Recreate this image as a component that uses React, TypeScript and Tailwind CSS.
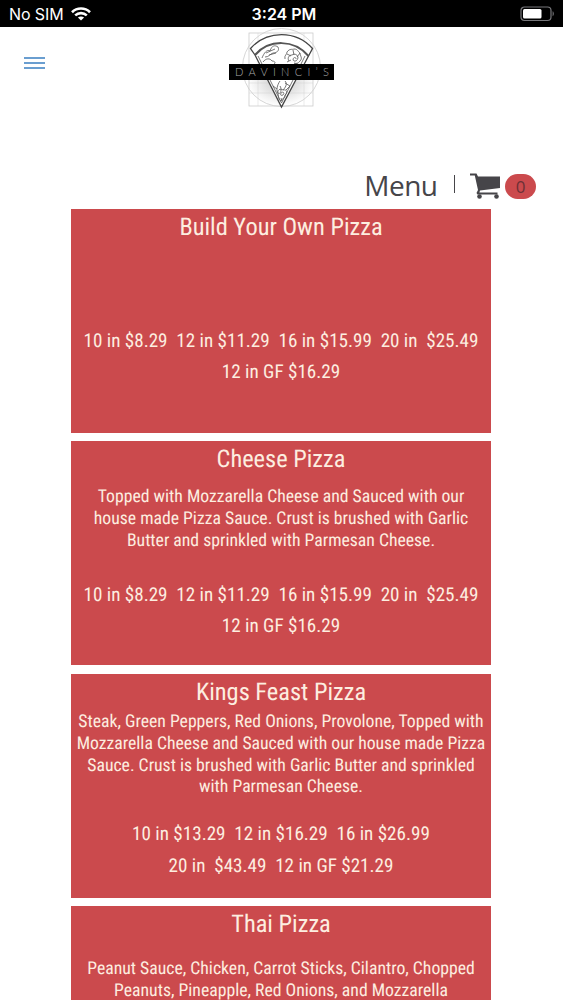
type Pizza = {
  name: string;
  description: string[];
  prices: string[];
  descriptionClass: string;
};

const pizzas: Pizza[] = [
  {
    name: "Build Your Own Pizza",
    description: [],
    prices: [
      "10 in $8.29  12 in $11.29  16 in $15.99  20 in  $25.49",
      "12 in GF $16.29",
    ],
    descriptionClass: "h-[80.6px]",
  },
  {
    name: "Cheese Pizza",
    description: [
      "Topped with Mozzarella Cheese and Sauced with our",
      "house made Pizza Sauce. Crust is brushed with Garlic",
      "Butter and sprinkled with Parmesan Cheese.",
    ],
    prices: [
      "10 in $8.29  12 in $11.29  16 in $15.99  20 in  $25.49",
      "12 in GF $16.29",
    ],
    descriptionClass: "h-[102.5px] pt-[11px]",
  },
  {
    name: "Kings Feast Pizza",
    description: [
      "Steak, Green Peppers, Red Onions, Provolone, Topped with",
      "Mozzarella Cheese and Sauced with our house made Pizza",
      "Sauce. Crust is brushed with Garlic Butter and sprinkled",
      "with Parmesan Cheese.",
    ],
    prices: [
      "10 in $13.29  12 in $16.29  16 in $26.99",
      "20 in  $43.49  12 in GF $21.29",
    ],
    descriptionClass: "h-[109.5px] pt-[3.5px]",
  },
  {
    name: "Thai Pizza",
    description: [
      "Peanut Sauce, Chicken, Carrot Sticks, Cilantro, Chopped",
      "Peanuts, Pineapple, Red Onions, and Mozzarella",
    ],
    prices: [],
    descriptionClass: "h-[102px] pt-[18px]",
  },
];

function StatusBar() {
  return (
    <div className="grid h-[27px] grid-cols-3 items-center bg-black pt-0.5 pr-2 pl-[9px] font-['Inter',sans-serif] text-white">
      <div className="flex items-center gap-[7px]">
        <span className="-mt-px text-[16px] leading-none tracking-[-0.1px]">No SIM</span>
        <svg className="-mt-0.5" width="20" height="14" viewBox="0 0 20 14" fill="none" stroke="white" strokeWidth="2.6">
          <path d="M1 5.2C6 .3 14 .3 19 5.2" />
          <path d="M4.2 8.4c3.3-3.1 8.3-3.1 11.6 0" />
          <path d="M10 13.5 6.9 10.6c1.7-1.6 4.5-1.6 6.2 0Z" fill="white" stroke="none" />
        </svg>
      </div>
      <span className="-mt-px pl-1 text-center text-[16px] leading-none font-semibold">3:24 PM</span>
      <svg className="-mt-0.5 justify-self-end" width="35" height="16" viewBox="0 0 35 16" fill="none">
        <rect x="1" y="1" width="30" height="13.5" rx="3.5" stroke="#77777b" strokeWidth="1.2" />
        <rect x="3" y="3" width="18.5" height="9.5" rx="1.5" fill="white" />
        <path d="M32.6 5.3c1.6.6 1.6 4.3 0 4.9Z" fill="#77777b" />
      </svg>
    </div>
  );
}

function Logo() {
  return (
    <svg width="105" height="81" viewBox="0 0 105 81" fill="none">
      <defs>
        <radialGradient id="shade">
          <stop offset="0" stopColor="#888" stopOpacity=".5" />
          <stop offset="1" stopColor="#999" stopOpacity="0" />
        </radialGradient>
      </defs>
      <ellipse cx="52" cy="54" rx="34" ry="24" fill="url(#shade)" />
      <g stroke="#ccc" strokeWidth=".8">
        <circle cx="52.5" cy="39.5" r="39" />
        <rect x="20" y="5" width="64" height="73" />
        <path d="M20 23h64M20 55h64M20 65h64M29 5v73M75 5v73" strokeOpacity=".5" />
      </g>
      <path d="M21.5 20.5C38 2 67 2 83.5 20.5L79.5 28 52.5 79 26 27Z" fill="white" stroke="#444" strokeWidth="1.3" />
      <path d="M26 27c14-16 39-16 53.5 1" stroke="#555" strokeWidth="2" />
      {/* Toppings */}
      <g stroke="#555" strokeWidth=".8">
        <path d="m29 28 23.5 47L76 28" />
        <path d="M33 30c2-5 5-9 8-7 2-6 5-6 8-4 2 4-2 6-5 6-3 1-4 4-8 4m1-4 9-4m-6 6 7-2M34 34c3-4 7-4 9-1 3 0 4 2 2 3" />
        <path d="M56 31c-1-4 2-4 2-7 3-4 5-2 7-3 4 0 4 3 6 4 0 3 3 5 0 8-2 3-4 2-6 3M60 33c-2-3 0-6 3-6 3-2 6 0 6 3-1 4-5 4-5 1 1-2 3-2 3 0m-9-5 4 2m2-6 1 5m6-2-3 4m-10 5 4-2m3 3 4 1" />
        <path d="M51 53c-3 4-4 10-2 12 3 2 4-4 2-7M56 53c3 3 0 7-2 9" />
        <path d="M49 66c-1-4 2-6 5-4 4-1 5 3 2 5 0 4-3 3-4 6-3-1-2-4-3-7m3-1c2-2 4 0 2 2-2 1-3 0-2-2m0 5 1 3M56 55l5 3-4 4m-9-1-4-3" />
      </g>
      <rect x="0" y="36" width="105" height="16" fill="#000" />
      <text x="6" y="48" fill="#aaa" fontFamily="Lato, sans-serif" fontSize="11" fontWeight="300" textLength="94" lengthAdjust="spacing">
        DAVINCI’S
      </text>
    </svg>
  );
}

function Header() {
  return (
    <header className="relative flex h-[141px] justify-center">
      <button className="absolute top-[30px] left-[24px] flex flex-col gap-[3px]" aria-label="Open menu">
        <span className="h-0.5 w-[21px] bg-[#6a9ed0]" />
        <span className="h-0.5 w-[21px] bg-[#6a9ed0]" />
        <span className="h-0.5 w-[21px] bg-[#6a9ed0]" />
      </button>
      <div className="pt-px">
        <Logo />
      </div>
    </header>
  );
}

function CartBar() {
  return (
    <div className="flex h-[41px] items-start justify-end pr-[27px] text-[#464549]">
      <span className="-mt-px font-['Open_Sans','Noto_Sans',sans-serif] text-[28px] leading-[36px] tracking-[-0.5px]">
        Menu
      </span>
      <span className="mt-[7px] ml-4 h-[18px] w-[1.5px] bg-[#464549]" />
      <svg className="mt-[5px] ml-[15px]" width="32" height="27" viewBox="0 0 32 27" fill="#464549">
        <path d="M0 .5h6.5L8 3.5h22V15L10 17.5l-.6 2h18.1v2h-20l-1-1.500L8 17 4.800 2.500H0Z" />
        <circle cx="9.5" cy="23.5" r="2.3" />
        <circle cx="26.5" cy="23.5" r="2.3" />
      </svg>
      <span className="mt-[6px] ml-[3px] flex h-[25px] w-[31px] items-center justify-center rounded-full bg-[#cb4a4d] font-['Open_Sans',sans-serif] text-[17px] text-[#6d3036]">
        0
      </span>
    </div>
  );
}

function PizzaCard({ pizza }: { pizza: Pizza }) {
  return (
    <article className="h-[224px] shrink-0 bg-[#cb4a4d] text-center whitespace-pre text-[#fdeee0]">
      <h2 className="h-[35px] text-[24.4px] leading-[36px]">{pizza.name}</h2>
      <div className={`text-[17.7px] leading-[21.8px] ${pizza.descriptionClass}`}>
        {pizza.description.map((line) => (
          <p key={line}>{line}</p>
        ))}
      </div>
      <div className="text-[19.1px] leading-[31.5px]">
        {pizza.prices.map((line) => (
          <p key={line}>{line}</p>
        ))}
      </div>
    </article>
  );
}

export default function App() {
  return (
    <div className="h-[1000px] w-[563px] overflow-hidden bg-white">
      <StatusBar />
      <Header />
      <CartBar />
      <main className="ml-[71px] flex w-[420px] flex-col gap-[8.3px] font-['Roboto_Condensed','Roboto',sans-serif] [font-stretch:75%] [text-rendering:geometricPrecision]">
        {pizzas.map((pizza) => (
          <PizzaCard key={pizza.name} pizza={pizza} />
        ))}
      </main>
    </div>
  );
}
